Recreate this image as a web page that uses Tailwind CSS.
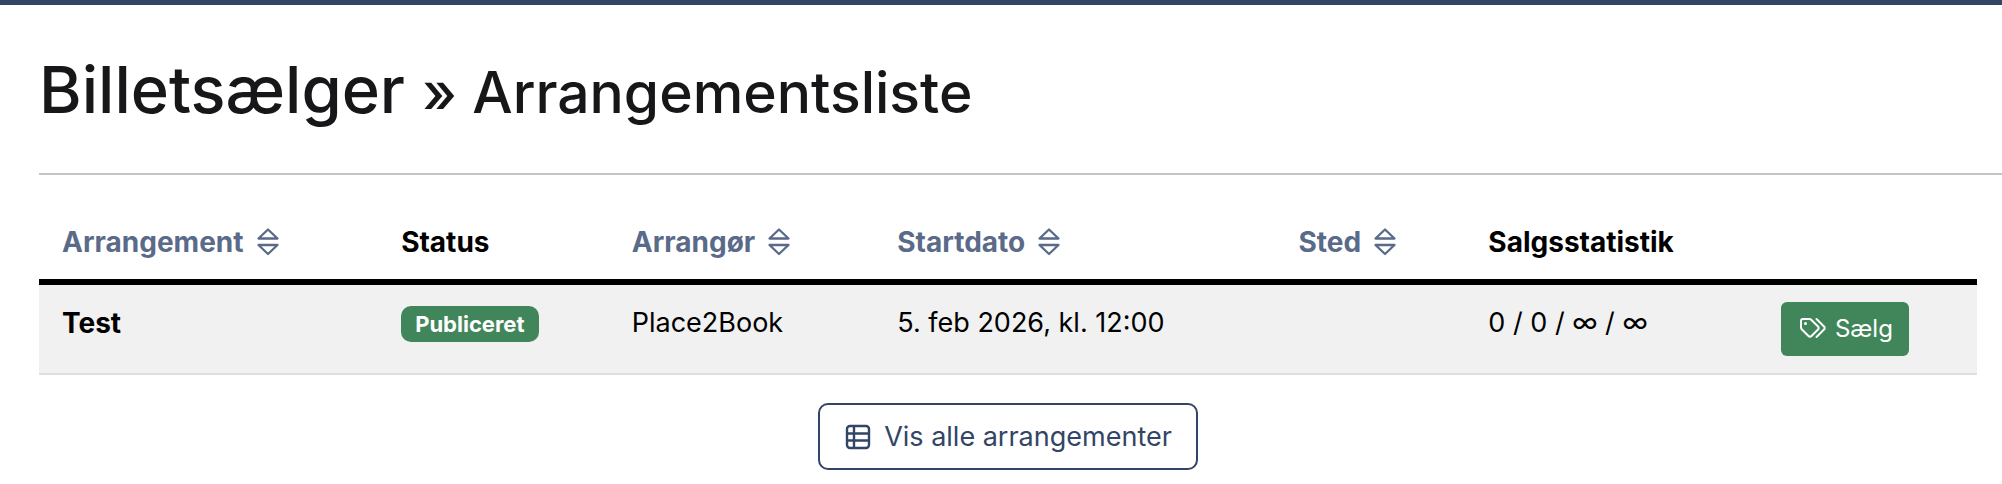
<!DOCTYPE html>
<html lang="da">
<head>
  <meta charset="UTF-8">
  <title>Arrangementsliste</title>
  <meta name="viewport" content="width=device-width, initial-scale=1.0">
  <script src="https://cdn.jsdelivr.net/npm/@tailwindcss/browser@4"></script>
</head>
<body class="bg-white text-black font-['Inter',sans-serif] text-[28px] leading-[42px] border-t-5 border-[#324566]">
  <header class="ml-[39px] pt-[43px] pb-[41px] border-b-2 border-[#c4c4c4]">
    <h1 class="text-[65px] leading-[84px] font-medium text-[#17171a]">Billetsælger <small class="text-[57px] leading-none">» Arrangementsliste</small></h1>
  </header>
  <main class="ml-[39px] mr-[25px]">
    <table class="w-full table-fixed border-collapse mt-[30px]">
      <colgroup>
        <col class="w-[17.5%]">
        <col class="w-[11.9%]">
        <col class="w-[13.7%]">
        <col class="w-[20.7%]">
        <col class="w-[9.8%]">
        <col class="w-[15.1%]">
        <col>
      </colgroup>
      <thead class="text-left border-b-6 border-black">
        <tr class="whitespace-nowrap">
          <th class="px-[23px] py-4">
            <a href="#" class="flex items-center gap-3 text-[#5a6a89]">Arrangement
              <svg class="w-6 h-8" viewBox="0 0 24 32" fill="none" stroke="currentColor" stroke-width="2.3" stroke-linejoin="round"><path d="M12 3.500 21.500 12.500H2.500ZM2.500 19H21.500L12 28Z"/></svg>
            </a>
          </th>
          <th class="px-[23px] py-4">Status</th>
          <th class="px-[23px] py-4">
            <a href="#" class="flex items-center gap-3 text-[#5a6a89]">Arrangør
              <svg class="w-6 h-8" viewBox="0 0 24 32" fill="none" stroke="currentColor" stroke-width="2.3" stroke-linejoin="round"><path d="M12 3.500 21.500 12.500H2.500ZM2.500 19H21.500L12 28Z"/></svg>
            </a>
          </th>
          <th class="px-[23px] py-4">
            <a href="#" class="flex items-center gap-3 text-[#5a6a89]">Startdato
              <svg class="w-6 h-8" viewBox="0 0 24 32" fill="none" stroke="currentColor" stroke-width="2.3" stroke-linejoin="round"><path d="M12 3.500 21.500 12.500H2.500ZM2.500 19H21.500L12 28Z"/></svg>
            </a>
          </th>
          <th class="px-[23px] py-4">
            <a href="#" class="flex items-center gap-3 text-[#5a6a89]">Sted
              <svg class="w-6 h-8" viewBox="0 0 24 32" fill="none" stroke="currentColor" stroke-width="2.3" stroke-linejoin="round"><path d="M12 3.500 21.500 12.500H2.500ZM2.500 19H21.500L12 28Z"/></svg>
            </a>
          </th>
          <th class="px-[23px] py-4">Salgsstatistik</th>
          <td></td>
        </tr>
      </thead>
      <tbody>
        <tr class="bg-[#f1f1f1] border-b-2 border-[#dfdfdf] align-top whitespace-nowrap text-[27px]">
          <td class="px-[23px] py-[17px] text-[28px] font-bold">Test</td>
          <td class="px-[23px] py-[17px]"><span class="flex items-center w-fit h-9 mt-1 px-[14px] rounded-[10px] bg-[#41865a] text-white text-[22px] font-bold">Publiceret</span></td>
          <td class="px-[23px] py-[17px]">Place2Book</td>
          <td class="px-[23px] py-[17px]">5. feb 2026, kl. 12:00</td>
          <td class="px-[23px] py-[17px]"></td>
          <td class="px-[23px] py-[17px]">0 / 0 / ∞ / ∞</td>
          <td class="px-[23px] py-[17px]">
            <a href="#" class="flex items-center gap-2 w-fit h-[54px] pl-[18px] pr-4 rounded-[6px] bg-[#41865a] text-white text-[24px]">
              <svg class="w-7 h-6" viewBox="0 0 28 24" fill="none" stroke="currentColor" stroke-width="2" stroke-linecap="round" stroke-linejoin="round"><path d="M4 2H10.500Q11.500 2 12.200 2.700L19 9.500Q20.500 11 19 12.500L12.500 19Q11 20.500 9.500 19L2.700 12.200Q2 11.500 2 10.500V4Q2 2 4 2ZM17.500 2 25 9.500Q26.500 11 25 12.500L17.500 20"/><circle cx="6.500" cy="6.500" r="1.500" fill="currentColor" stroke="none"/></svg>
              Sælg
            </a>
          </td>
        </tr>
      </tbody>
    </table>
    <div class="flex justify-center mt-7">
      <button type="button" class="flex items-center gap-3 h-[67px] px-6 rounded-[10px] border-2 border-[#324566] text-[27px] text-[#324566]">
        <svg class="w-7 h-7" viewBox="0 0 28 28" fill="none" stroke="currentColor" stroke-width="2.400"><rect x="3" y="3" width="22" height="22" rx="3"/><path d="M10 3V25M3 10.500H25M3 17.500H25"/></svg>
        Vis alle arrangementer
      </button>
    </div>
  </main>
</body>
</html>
